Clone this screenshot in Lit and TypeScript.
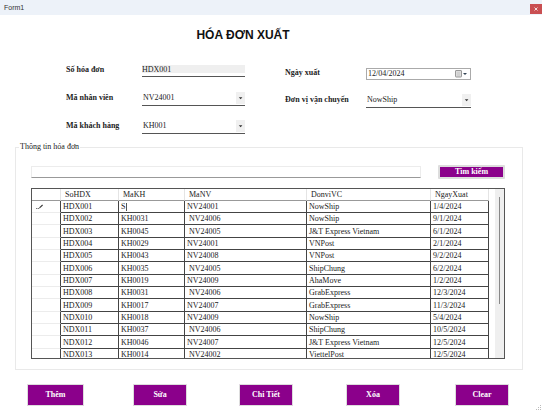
import { LitElement, html, css } from "lit";
import { customElement, property } from "lit/decorators.js";

interface Invoice {
  id: string;
  customer: string;
  staff: string;
  carrier: string;
  date: string;
}

const invoices: Invoice[] = [
  ["HDX001", "S", "NV24001", "NowShip", "1/4/2024"],
  ["HDX002", "KH0031", " NV24006", "NowShip", "9/1/2024"],
  ["HDX003", "KH0045", " NV24005", "J&T Express Vietnam", "6/1/2024"],
  ["HDX004", "KH0029", "NV24001", "VNPost", "2/1/2024"],
  ["HDX005", "KH0043", "NV24008", "VNPost", "9/2/2024"],
  ["HDX006", "KH0035", " NV24005", "ShipChung", "6/2/2024"],
  ["HDX007", "KH0019", "NV24009", "AhaMove", "1/2/2024"],
  ["HDX008", "KH0031", " NV24006", "GrabExpress", "12/3/2024"],
  ["HDX009", "KH0017", "NV24007", "GrabExpress", "11/3/2024"],
  ["NDX010", "KH0018", "NV24009", "NowShip", "5/4/2024"],
  ["NDX011", "KH0037", " NV24006", "ShipChung", "10/5/2024"],
  ["NDX012", "KH0046", "NV24007", "J&T Express Vietnam", "12/5/2024"],
  ["NDX013", "KH0014", " NV24002", "ViettelPost", "12/5/2024"],
].map(([id, customer, staff, carrier, date]) => ({ id, customer, staff, carrier, date }));

@customElement("combo-field")
export class ComboField extends LitElement {
  @property() label = "";
  @property() value = "";

  static styles = css`
    :host {
      display: flex;
      align-items: center;
    }
    .label {
      flex: none;
      width: var(--label-width);
      font-weight: bold;
      line-height: 12px;
      padding-bottom: 2px;
    }
    .box {
      position: relative;
      flex: 1;
      display: flex;
      height: 14px;
      box-sizing: border-box;
      border-bottom: 1px solid #555;
    }
    .select {
      appearance: none;
      flex: 1;
      min-width: 0;
      border: 0;
      padding: 0 0 1px 1px;
      background: none;
      font: inherit;
      color: inherit;
      outline: none;
    }
    .arrow {
      position: absolute;
      right: 0;
      top: 0;
      width: 9px;
      height: 12px;
      background: #f0f0f0;
      pointer-events: none;
    }
  `;

  render() {
    return html`
      <label class="label" for="select">${this.label}</label>
      <div class="box">
        <select class="select" id="select">
          <option>${this.value}</option>
        </select>
        <svg class="arrow" viewBox="0 0 9 12"><path d="M2.8 5.2h3.6L4.6 7.2z" fill="#333" /></svg>
      </div>
    `;
  }
}

@customElement("invoice-grid")
export class InvoiceGrid extends LitElement {
  static styles = css`
    :host {
      display: flex;
      height: 171px;
      box-sizing: border-box;
      border: 1px solid #555;
      overflow: hidden;
    }
    .table {
      flex: 1;
      table-layout: fixed;
      border-collapse: separate;
      border-spacing: 0;
      align-self: flex-start;
    }
    .marker { width: 29px; }
    .id { width: 58px; }
    .customer { width: 66px; }
    .staff { width: 122px; }
    .date { width: 58px; }
    th,
    td {
      box-sizing: border-box;
      height: 12px;
      padding: 0 0 0 2px;
      line-height: 11px;
      text-align: left;
      white-space: pre;
      font-weight: normal;
      border-right: 1px solid #444;
      border-bottom: 1px solid #444;
      overflow: hidden;
    }
    tr:nth-child(3n) td {
      height: 13px;
    }
    thead th {
      padding-left: 4px;
      border-right-color: #e4e4e4;
      border-bottom-color: #999;
    }
    .row-head {
      border-bottom-color: #ececec;
    }
    .pencil {
      display: block;
      width: 8px;
      height: 6px;
      margin-left: 2px;
    }
    .editor {
      display: flex;
      align-items: center;
    }
    .edit {
      width: 5px;
      height: 11px;
      padding: 0;
      border: 0;
      font: inherit;
      color: inherit;
      background: none;
      outline: none;
    }
    .caret {
      width: 1px;
      height: 8px;
      background: #555;
    }
    .track {
      flex: none;
      width: 9px;
      margin-left: 6px;
      background: #efefef;
      display: flex;
      justify-content: center;
    }
    .thumb {
      width: 1px;
      height: 107px;
      margin-top: 8px;
      background: #888;
    }
  `;

  private customerCell(row: Invoice, index: number) {
    return index === 0
      ? html`<td><div class="editor"><input class="edit" aria-label="MaKH" .value=${row.customer} /><span class="caret"></span></div></td>`
      : html`<td>${row.customer}</td>`;
  }

  render() {
    return html`
      <table class="table">
        <colgroup>
          <col class="marker" /><col class="id" /><col class="customer" /><col class="staff" /><col /><col class="date" />
        </colgroup>
        <thead>
          <tr><th></th><th>SoHDX</th><th>MaKH</th><th>MaNV</th><th>DonviVC</th><th>NgayXuat</th></tr>
        </thead>
        <tbody>
          ${invoices.map(
            (row, i) => html`<tr>
              <td class="row-head">${i === 0
                ? html`<svg class="pencil" viewBox="0 0 8 6"><path d="M3.5 3.8L6.6 1" stroke="#333" stroke-width="1.1" /><path d="M0 4.5h1M1.5 4.5h1.8" stroke="#777" stroke-width="1" /></svg>`
                : ""}</td>
              <td>${row.id}</td>
              ${this.customerCell(row, i)}
              <td>${row.staff}</td>
              <td>${row.carrier}</td>
              <td>${row.date}</td>
            </tr>`
          )}
        </tbody>
      </table>
      <div class="track"><div class="thumb"></div></div>
    `;
  }
}

@customElement("app-root")
export class AppRoot extends LitElement {
  static styles = css`
    :host {
      display: flex;
      flex-direction: column;
      min-height: 100vh;
      background: #fff;
      color: #222;
      font: 8px/10px "Liberation Serif", serif;
    }
    .titlebar {
      display: flex;
      justify-content: space-between;
      align-items: center;
      height: 15px;
      padding-left: 4px;
      background: #edf2f9;
      color: #333;
      font: 7px/9px "Liberation Sans", sans-serif;
    }
    .close {
      display: flex;
      align-items: center;
      justify-content: center;
      width: 12px;
      height: 10px;
      margin-top: 2px;
      padding: 0;
      border: 0;
      background: #c94f52;
    }
    .close-icon {
      width: 4px;
      height: 4px;
    }
    .heading {
      margin: 13px 56px 0 0;
      text-align: center;
      color: #111;
      font: bold 12px/14px "Liberation Sans", sans-serif;
    }
    .form {
      display: grid;
      grid-template-columns: 179fr 186fr;
      column-gap: 40px;
      padding: 15px 71px 0 66px;
    }
    .column {
      display: grid;
      grid-auto-rows: 28px;
      align-content: start;
      align-items: center;
    }
    .left {
      --label-width: 76px;
    }
    .right {
      --label-width: 81px;
      padding-top: 3px;
      grid-auto-rows: 27px;
    }
    .field {
      display: flex;
      align-items: center;
    }
    .label {
      flex: none;
      width: var(--label-width);
      font-weight: bold;
      line-height: 12px;
      padding-bottom: 2px;
    }
    .text {
      flex: 1;
      min-width: 0;
      box-sizing: border-box;
      height: 12px;
      padding: 0 0 3px;
      border: 0;
      border-bottom: 1px solid #555;
      background: #efefef content-box;
      font: inherit;
      color: inherit;
      outline: none;
    }
    .date-box {
      position: relative;
      flex: 1;
      display: flex;
    }
    .date {
      flex: 1;
      min-width: 0;
      box-sizing: border-box;
      height: 12px;
      padding: 0 1px;
      border: 1px solid #aaa;
      background: #fff;
      font: inherit;
      color: inherit;
      outline: none;
    }
    .date::-webkit-calendar-picker-indicator {
      opacity: 0;
      width: 12px;
      height: 8px;
      padding: 0;
    }
    .date::-webkit-datetime-edit,
    .date::-webkit-datetime-edit-fields-wrapper,
    .date::-webkit-datetime-edit-month-field,
    .date::-webkit-datetime-edit-day-field,
    .date::-webkit-datetime-edit-year-field {
      padding: 0;
    }
    .calendar {
      position: absolute;
      right: 3px;
      top: 2px;
      width: 13px;
      height: 8px;
      pointer-events: none;
    }
    .group {
      min-width: 0;
      margin: 1px 19px 0 15px;
      padding: 13px 17px 10px 15px;
      border: 1px solid #e9e9e9;
    }
    .legend {
      margin-left: -12px;
      padding: 0 1px;
    }
    .search {
      display: flex;
      align-items: center;
      gap: 17px;
      margin-bottom: 9px;
    }
    .query {
      flex: 1;
      min-width: 0;
      box-sizing: border-box;
      height: 12px;
      padding: 0 2px;
      border: 1px solid #ececec;
      border-bottom-color: #999;
      font: inherit;
      outline: none;
    }
    .button {
      box-sizing: border-box;
      width: 54px;
      height: 22px;
      padding: 0;
      border: 1px solid #ddd;
      border-radius: 1px;
      background: #8b008b;
      color: #fff;
      font: bold 8px/10px "Liberation Serif", serif;
    }
    .find {
      width: 67px;
      height: 14px;
      border-width: 2px;
    }
    .actions {
      display: grid;
      grid-template-columns: 106fr 106fr 107fr 109fr 54fr;
      padding: 14px 33px 6px 27px;
    }
    .wide {
      width: 57px;
    }
    .grip {
      position: absolute;
      right: 0;
      bottom: 1px;
      width: 6px;
      height: 6px;
    }
    .window {
      position: relative;
      flex: 1;
    }
  `;

  render() {
    return html`
      <header class="titlebar">
        <span>Form1</span>
        <button class="close" aria-label="Close">
          <svg class="close-icon" viewBox="0 0 4 4"><path d="M.5.5l3 3M3.5.5l-3 3" stroke="#fff" stroke-width=".8" /></svg>
        </button>
      </header>
      <main class="window">
        <h1 class="heading">HÓA ĐƠN XUẤT</h1>
        <div class="form">
          <div class="column left">
            <div class="field">
              <label class="label" for="invoice">Số hóa đơn</label>
              <input class="text" id="invoice" value="HDX001" />
            </div>
            <combo-field label="Mã nhân viên" value="NV24001"></combo-field>
            <combo-field label="Mã khách hàng" value="KH001"></combo-field>
          </div>
          <div class="column right">
            <div class="field">
              <label class="label" for="date">Ngày xuất</label>
              <div class="date-box">
                <input class="date" id="date" type="date" value="2024-12-04" />
                <svg class="calendar" viewBox="0 0 13 8">
                  <rect x=".5" y=".5" width="6" height="6.5" rx=".5" fill="#ddd" stroke="#999" />
                  <path d="M2 3h3M2 5h3" stroke="#bbb" stroke-width=".7" />
                  <path d="M8 3h4L10 5z" fill="#345" />
                </svg>
              </div>
            </div>
            <combo-field label="Đơn vị vận chuyển" value="NowShip"></combo-field>
          </div>
        </div>
        <fieldset class="group">
          <legend class="legend">Thông tin hóa đơn</legend>
          <div class="search">
            <input class="query" type="search" aria-label="Tìm kiếm" />
            <button class="button find">Tìm kiếm</button>
          </div>
          <invoice-grid></invoice-grid>
        </fieldset>
        <div class="actions">
          <button class="button wide">Thêm</button>
          <button class="button">Sửa</button>
          <button class="button">Chi Tiết</button>
          <button class="button">Xóa</button>
          <button class="button">Clear</button>
        </div>
        <svg class="grip" viewBox="0 0 6 6" fill="#bbb">
          <path d="M4 0h1v1H4zM2 2h1v1H2zM4 2h1v1H4zM0 4h1v1H0zM2 4h1v1H2zM4 4h1v1H4z" />
        </svg>
      </main>
    `;
  }
}
